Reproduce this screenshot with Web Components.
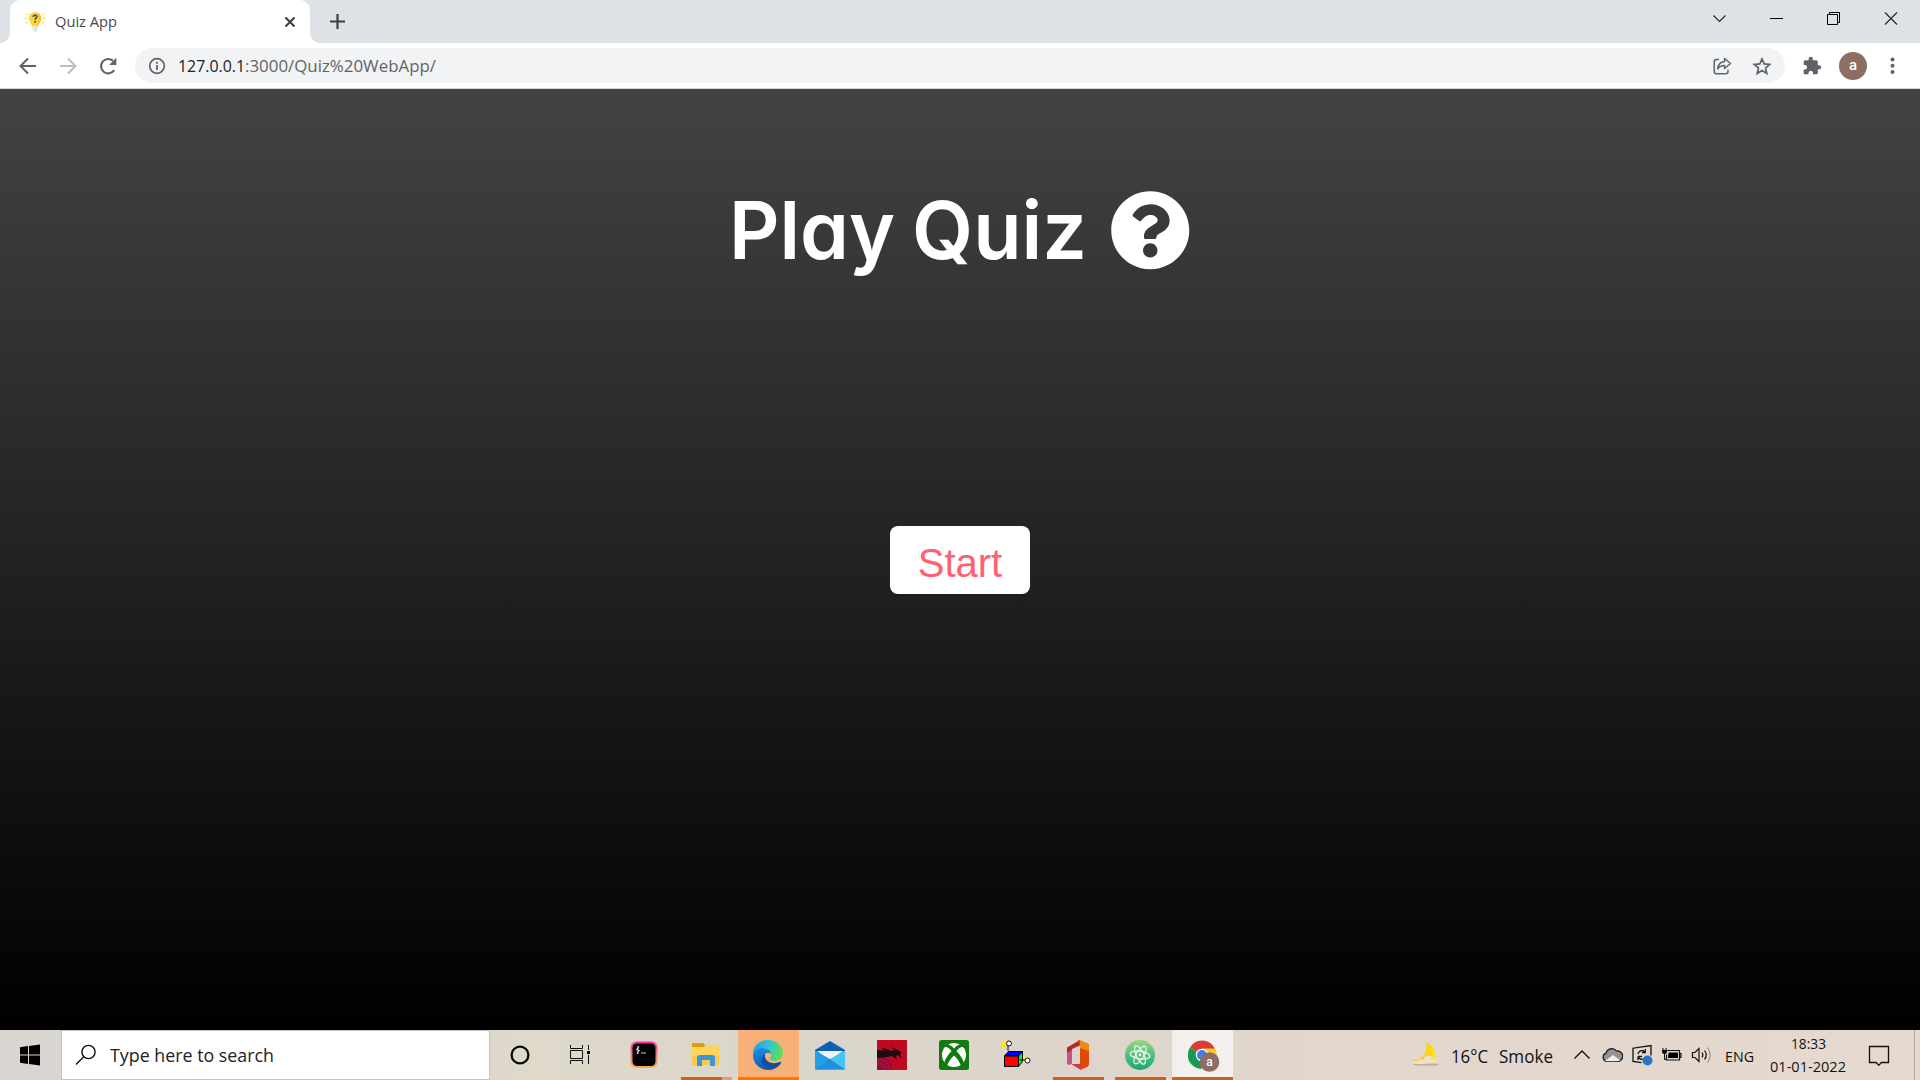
<!DOCTYPE html>
<html lang="en">
<head>
<meta charset="utf-8">
<title>Quiz App</title>
<style>
html,body{margin:0;height:100%;overflow:hidden;background:#000}
body{font-family:"Open Sans","Noto Sans",sans-serif}
</style>
</head>
<body>
<desktop-screen></desktop-screen>
<script>
function define(name, html, setup) {
  const tpl = document.createElement('template');
  tpl.innerHTML = html;
  customElements.define(name, class extends HTMLElement {
    constructor() {
      super();
      this.attachShadow({mode: 'open'}).appendChild(tpl.content.cloneNode(true));
    }
    connectedCallback() { if (setup) setup.call(this, this.shadowRoot); }
  });
}

/* Text condensed or widened to an exact advance width. */
define('fit-text', `
<style>
:host{display:block;flex:none;line-height:24px}
span{display:inline-block;white-space:pre;vertical-align:top;transform-origin:0 50%}
</style><span><slot></slot></span>`, function (root) {
  const span = root.querySelector('span'), w = +this.getAttribute('w');
  this.style.width = w + 'px';
  span.style.transform = 'scaleX(' + w / span.getBoundingClientRect().width + ')';
});

define('tab-strip', `
<style>
:host{display:flex;height:43px;background:#dee1e6;justify-content:space-between}
svg{display:block;flex:none}
.left,.right{display:flex}
.tab{display:flex;align-items:center;width:300px;margin-left:10px;height:43px;background:#fff;border-radius:10px 10px 0 0;position:relative;box-sizing:border-box;padding:0 13px 0 15px}
.tab::before,.tab::after{content:"";position:absolute;bottom:0;width:10px;height:10px}
.tab::before{left:-10px;background:radial-gradient(circle at 0 0,#dee1e6 9.6px,#fff 10.2px)}
.tab::after{right:-10px;background:radial-gradient(circle at 100% 0,#dee1e6 9.6px,#fff 10.2px)}
fit-text{margin:0 auto 2px 10px;font-size:14.6px;color:#45494d}
.plus{margin:13px 0 0 19px}
.right svg{margin-top:9px}
</style>
<div class="left">
 <div class="tab">
  <svg width="20" height="22" viewBox="0 0 20 22"><path d="M10 1.2c-3.8 0-6.3 2.7-6.3 6 0 3.6 2.9 4.6 3.3 8.3h6c.4-3.7 3.3-4.7 3.3-8.3 0-3.3-2.500-6-6.300-6z" fill="#fdd835"/><path d="M12.200 1.700c1.700 2.500 2 9-.7 13.800H13c.4-3.700 3.300-4.700 3.300-8.300 0-2.700-1.600-4.800-4.100-5.500z" fill="#fbc02d"/><path d="M7.200 16h5.600v2.400L11.300 21H8.700l-1.500-2.600z" fill="#d5ecf8"/><path d="M.8 3l1.900 1M0 7.500h2M.8 12l1.900-1M19.200 3l-1.900 1M20 7.500h-2M19.200 12l-1.900-1" stroke="#ffd54f" stroke-width="1.300"/><path d="M8.300 6c0-2.500 3.500-2.200 3.500-.2 0 1.500-1.700 1.400-1.700 3" fill="none" stroke="#455a64" stroke-width="1.700"/><circle cx="10.100" cy="10.700" r="1" fill="#455a64"/></svg>
  <fit-text w="62">Quiz App</fit-text>
  <svg width="14" height="14" viewBox="0 0 14 14"><path d="M2.500 2.500l9 9M11.500 2.500l-9 9" stroke="#3c4043" stroke-width="2.100"/></svg>
 </div>
 <svg class="plus" width="17" height="17" viewBox="0 0 17 17"><path d="M8.500 1v15M1 8.500h15" stroke="#3c4043" stroke-width="2.200"/></svg>
</div>
<div class="right">
 <svg width="57" height="20" viewBox="0 0 57 20" style="margin-right:0"><path d="M22.500 6.500l6 6 6-6" fill="none" stroke="#222" stroke-width="1.100"/></svg>
 <svg width="57" height="20" viewBox="0 0 57 20"><path d="M22 9.500h13" stroke="#000"/></svg>
 <svg width="57" height="20" viewBox="0 0 57 20"><path d="M22.500 5.500h10v10h-10zM24.500 5.500v-2h10v10h-2" fill="none" stroke="#000"/></svg>
 <svg width="58" height="20" viewBox="0 0 58 20"><path d="M23 3.500l12 12M35 3.500l-12 12" stroke="#222" stroke-width="1.100"/></svg>
</div>`);

define('tool-bar', `
<style>
:host{display:flex;align-items:center;height:45px;background:#fff;border-bottom:1px solid #d5d7da;box-sizing:content-box}
svg{display:block;flex:none}
.nav{display:flex;gap:20px;padding:0 17px 0 18px}
.box{display:flex;align-items:center;width:1650px;height:35px;border-radius:18px;background:#f1f3f4;box-sizing:border-box;padding:0 13px 0 12px}
fit-text{font-size:17px;color:#5f6368}
.host{color:#202124;margin-left:11px}
.path{margin-right:auto}
.avatar{width:28px;height:28px;border-radius:50%;background:#8d6e63;color:#fff;font:500 15px/26px Roboto,sans-serif;text-align:center;margin:0 24px 0 17px}
</style>
<div class="nav">
 <svg width="20" height="20" viewBox="0 0 20 20"><path d="M18 10H3M10 2.500L2.500 10l7.500 7.500" fill="none" stroke="#5f6368" stroke-width="2"/></svg>
 <svg width="20" height="20" viewBox="0 0 20 20"><path d="M2 10h15M10 2.500l7.500 7.500-7.500 7.500" fill="none" stroke="#bbbdc0" stroke-width="2"/></svg>
 <svg width="20" height="20" viewBox="0 0 20 20"><path d="M16.200 14.200A7.200 7.200 0 1 1 15 4.800" fill="none" stroke="#5f6368" stroke-width="2.100"/><path d="M18.300 1.800V9h-7.200z" fill="#5f6368"/></svg>
</div>
<div class="box">
 <svg width="20" height="20" viewBox="0 0 20 20"><circle cx="10" cy="10" r="7.300" fill="none" stroke="#5f6368" stroke-width="1.700"/><path d="M10 9v5M10 5.800v1.900" stroke="#5f6368" stroke-width="1.800"/></svg>
 <fit-text class="host" w="67">127.0.0.1</fit-text><fit-text class="path" w="191">:3000/Quiz%20WebApp/</fit-text>
 <svg width="20" height="20" viewBox="0 0 20 20" style="margin-right:20px"><path d="M7 3.500H4.500a2.300 2.300 0 0 0-2.300 2.300v9.700a2.300 2.300 0 0 0 2.300 2.300h9.200a2.300 2.300 0 0 0 2.300-2.300v-1.800" fill="none" stroke="#5f6368" stroke-width="1.500"/><path d="M12.500 2.500l6 5-6 5v-3c-3.300 0-5.300 1-6.800 3.300.3-3.900 2.600-6.800 6.800-7.300z" fill="none" stroke="#5f6368" stroke-width="1.500" stroke-linejoin="round"/></svg>
 <svg width="20" height="20" viewBox="0 0 20 20"><path d="M10 2.800l2.200 5.100 5.500.5-4.200 3.600 1.300 5.400L10 14.500l-4.800 2.900L6.500 12 2.300 8.400l5.500-.5z" fill="none" stroke="#5f6368" stroke-width="1.700"/></svg>
</div>
<svg width="20" height="20" viewBox="0 0 24 24" style="margin-left:17px"><path fill="#5f6368" d="M20.500 11H19V7c0-1.100-.9-2-2-2h-4V3.500C13 2.120 11.880 1 10.500 1S8 2.120 8 3.500V5H4c-1.100 0-1.990.9-1.990 2v3.800H3.500c1.490 0 2.700 1.210 2.700 2.700s-1.210 2.700-2.700 2.700H2V20c0 1.100.9 2 2 2h3.800v-1.500c0-1.490 1.210-2.700 2.700-2.700 1.490 0 2.700 1.210 2.700 2.700V22H17c1.100 0 2-.9 2-2v-4h1.500c1.380 0 2.500-1.120 2.500-2.500S21.880 11 20.500 11z"/></svg>
<div class="avatar">a</div>
<svg width="5" height="20" viewBox="0 0 5 20" style="margin-left:-1px"><g fill="#5f6368"><circle cx="2.500" cy="3.500" r="2"/><circle cx="2.500" cy="9.800" r="2"/><circle cx="2.500" cy="16.100" r="2"/></g></svg>`);

define('quiz-page', `
<style>
:host{display:flex;flex-direction:column;align-items:center;flex:1;background:linear-gradient(to top,#000,#434343)}
h1{display:flex;margin:80px 0 0;height:120px;font:600 80px/120px Inter,sans-serif;font-feature-settings:"cv11","ss03";color:#fff}
h1 fit-text{line-height:122px}
svg{display:block;margin:21px 0 0 23px}
button{margin-top:237px;width:140px;height:68px;border:0;border-radius:8px;background:#fff;color:#ff6070;font:40px/44px "Liberation Sans",Arial,sans-serif;padding:6px 0 0}
</style>
<h1><fit-text w="166">Play</fit-text><fit-text w="175" style="margin-left:17px">Quiz</fit-text>
<svg width="80.500" height="80.500" viewBox="0 0 512 512"><path fill="#fff" d="M504 256c0 136.997-111.043 248-248 248S8 392.997 8 256C8 119.083 119.043 8 256 8s248 111.083 248 248zM262.655 90c-54.497 0-89.255 22.957-116.549 63.758-3.536 5.286-2.353 12.415 2.715 16.258l34.699 26.310c5.205 3.947 12.621 3.008 16.665-2.122 17.864-22.658 30.113-35.797 57.303-35.797 20.429 0 45.698 13.148 45.698 32.958 0 14.976-12.363 22.667-32.534 33.976C247.128 238.528 216 254.941 216 296v4c0 6.627 5.373 12 12 12h56c6.627 0 12-5.373 12-12v-1.333c0-28.462 83.186-29.647 83.186-106.667 0-58.002-60.165-102-116.531-102zM256 338c-25.365 0-46 20.635-46 46 0 25.364 20.635 46 46 46s46-20.636 46-46c0-25.364-20.635-46-46-46z"/></svg></h1>
<button>Start</button>`);

define('task-button', `
<style>
:host{display:flex;flex-direction:column;align-items:center;width:61px;height:50px;flex:none;margin-right:1px;box-sizing:border-box;padding-top:10px}
:host([active]){background:#f3efec}
:host([alert]){background:#f9b078}
.icon{height:30px;width:30px;margin-right:1px}
.line{height:3px;width:51px;margin-top:7px}
:host([open]) .line{background:#c8602a}
:host([multi]) .line{background:linear-gradient(90deg,#c8602a 41px,#df9e80 41px)}
:host([active]) .line{width:61px;background:#c8602a}
:host([alert]) .line{width:61px;background:#ff7700}
</style><div class="icon"><slot></slot></div><div class="line"></div>`);

define('task-bar', `
<style>
:host{display:flex;height:50px;flex:none;background:linear-gradient(90deg,#d9d6d2 0,#dcd7cc 20%,#dfd9ca 28%,#dad5cb 42%,#ddd5cb 55%,#e2d7cd 70%,#e6d9cf 100%)}
svg{display:block;flex:none}
.search{display:flex;align-items:center;width:429px;height:50px;box-sizing:border-box;background:#fff;border:1px solid #c4c4c8;margin-right:0}
.search svg{margin-left:13px}
.search fit-text{font-size:18.200px;color:#222;margin:0 0 0 13px}
.tray{display:flex;align-items:center;margin-left:auto;color:#111}
.clock{display:flex;flex-direction:column;align-items:center;width:76px;margin-left:16px;font-size:14.800px}
.clock fit-text{line-height:23px}
</style>
<svg width="61" height="50" viewBox="0 0 61 50"><path d="M20 17.200l8-1.100v8.400h-8zM29 16l11-1.500v10H29zM20 25.500h8v8.400l-8-1.100zM29 25.500h11v10L29 34z" fill="#000"/></svg>
<div class="search">
 <svg width="22" height="22" viewBox="0 0 22 22"><circle cx="13.500" cy="8" r="6.600" fill="none" stroke="#111" stroke-width="1.400"/><path d="M8.800 12.700L1 20.500" stroke="#111" stroke-width="1.400"/></svg>
 <fit-text w="164">Type here to search</fit-text>
</div>
<svg width="60" height="50" viewBox="0 0 60 50"><circle cx="30" cy="25" r="8.400" fill="none" stroke="#0a0a0a" stroke-width="2.300"/></svg>
<svg width="64" height="50" viewBox="0 0 64 50"><path d="M20.500 15v3.500h12V15M20.500 34v-3.500h12V34M20.500 20.500h12v8h-12zM38.500 15v5M38.500 25v9" fill="none" stroke="#111"/><path d="M37 21h3v3h-3z"/></svg>
<task-button><svg width="30" height="30" viewBox="0 0 30 30"><defs><linearGradient id="h" x2="0" y2="1"><stop stop-color="#ff2fa8"/><stop offset=".55" stop-color="#f67d80"/><stop offset="1" stop-color="#f9ac45"/></linearGradient></defs><rect x="1.500" y="1.500" width="27" height="26.500" rx="6" fill="url(#h)"/><rect x="3.500" y="3.500" width="23" height="22.500" rx="4.500"/><path d="M10 6.500l-2.300 3.200 2.500.8-2.300 3M9 6v8" fill="none" stroke="#ddd" stroke-width="1.200"/><path d="M12 13h5" stroke="#aaa" stroke-width="1.200"/></svg></task-button>
<task-button open multi><svg width="30" height="30" viewBox="0 0 30 30"><path d="M1 3h11l2 2-1 3H1z" fill="#e29c08"/><path d="M1 7h13l1-2h13v20H1z" fill="#ffd45e"/><path d="M1 16h27v9H1z" fill="#fac94b"/><path d="M6 26V17.500q0-2.500 2.500-2.500h13q2.500 0 2.500 2.500V26h-5v-6h-8v6z" fill="#3c94d9"/></svg></task-button>
<task-button alert><svg width="30" height="30" viewBox="0 0 30 30"><defs><linearGradient id="e1" x1="0" y1=".3" x2="1" y2=".5"><stop stop-color="#209fe5"/><stop offset=".5" stop-color="#2fc5d0"/><stop offset="1" stop-color="#65dd50"/></linearGradient><linearGradient id="e2" x2=".3" y2="1"><stop stop-color="#1795e8"/><stop offset="1" stop-color="#0c5bb5"/></linearGradient></defs><path d="M0 14C0 5 7 0 15 0c9 0 15 6 15 13 0 5-4 8-8 8-3 0-5-1-5-2.500 0-1 1.300-1.500 1.300-4C18.300 11 14 8 9 8 5 8 2 10 0 14z" fill="url(#e1)"/><path d="M0 15C1 10 5 8 9 8c5 0 9.300 3 9.300 6.500 0-2-6-3.500-7 1.500-1 7 4 13 9 13.300C9 32 0 25 0 15z" fill="url(#e2)"/><path d="M12 14c-5 3-5 11 3 14.500C20 31 26 27 28 23c.5-1-.5-1.500-1.300-1C20 25 11 22 12 14z" fill="#104fa0"/></svg></task-button>
<task-button><svg width="30" height="30" viewBox="0 0 30 30"><path d="M0 10L15 1l15 9v8H0z" fill="#0b62b3"/><path d="M2 11h26L15 21z" fill="#f3f3f5"/><path d="M0 10.500L15 19l15 10.500H0z" fill="#259fe3"/><path d="M15 19l15-8.500V29.500z" fill="#43c6f4"/><path d="M0 29.500L15 19l15 10.500z" fill="#1f8fdc"/></svg></task-button>
<task-button><svg width="30" height="30" viewBox="0 0 30 30"><path d="M0 0h30v30H0z" fill="#bd0a1e"/><path d="M0 17c9-2 14 3 16 13H0z" fill="#950c33"/><path d="M0 20c7-2 11 2 13 10M0 24c5-1 7 1 9 6" fill="none" stroke="#be1447"/><path d="M0 10c4 0 6 1 8 1l-4-3c5 0 8 2 10 3l4-1-5-3c4 1 9 3 12 6l-2 1 2 5-4-4-2 1 1 4-5-4-5 1-10 1z" fill="#1d0b12"/></svg></task-button>
<task-button><svg width="30" height="30" viewBox="0 0 30 30"><rect width="30" height="30" rx="2.500" fill="#107c10"/><circle cx="15" cy="15" r="12" fill="#fff"/><path d="M4 4q6-1 11 4.500Q20 3 26 4l-2 3q-3-.5-6.500 4Q25 19 25.500 26l-3 1Q20 20 15 15.500 10 20 7.500 27l-3-1Q5 19 12.500 11 9 6.500 6 7z" fill="#107c10"/></svg></task-button>
<task-button><svg width="30" height="30" viewBox="0 0 30 30"><path d="M7 11V4" stroke="#111" fill="none"/><path d="M0 1h7v3H4v3H1z" fill="#ffee00"/><circle cx="8" cy="3.500" r="2.500" fill="#fff" stroke="#111"/><path d="M3.500 16l4-4.500h14l-4 4.500z" fill="#00f" stroke="#000"/><path d="M17.500 16l4-4.500v10l-4 5z" fill="#1ee01e" stroke="#000"/><path d="M3.500 16h14v10.500h-14z" fill="#f00" stroke="#000"/><path d="M19 20h5" stroke="#000"/><path d="M23 18l4-2 2 4-4 2z" fill="#ffee00"/><circle cx="26.500" cy="20.500" r="2.500" fill="#fff" stroke="#111"/></svg></task-button>
<task-button open><svg width="30" height="30" viewBox="0 0 30 30"><path d="M4 7.500L17 0v5.500L9 9v14l-3 2-2-2z" fill="#b7272e"/><path d="M4 13l5-3v13l-4 2-1-2z" fill="#ca5383"/><path d="M15 0l7 2.500q4 1 4 3v19q0 2-3 3l-6 2.500V6z" fill="#e04a05"/><path d="M17 0l5 2.500q4 1 4 3V11l-9-3z" fill="#ee8b12"/><path d="M8 24h10v6z" fill="#d8344a"/></svg></task-button>
<task-button open><svg width="30" height="30" viewBox="0 0 30 30"><defs><linearGradient id="a" x2="0" y2="1"><stop stop-color="#96d783"/><stop offset="1" stop-color="#17a576"/></linearGradient></defs><circle cx="15" cy="15" r="15" fill="url(#a)"/><g fill="none" stroke="#e0f7e5" stroke-width="1.300"><ellipse cx="15" cy="15" rx="10" ry="3.800" transform="rotate(8 15 15)"/><ellipse cx="15" cy="15" rx="10" ry="3.800" transform="rotate(65 15 15)"/><ellipse cx="15" cy="15" rx="10" ry="3.800" transform="rotate(122 15 15)"/></g><circle cx="15" cy="15" r="1.400" fill="#fff"/></svg></task-button>
<task-button active><svg width="32" height="32" viewBox="0 0 32 32" style="margin-left:1px"><path d="M14 15L2 7.500A14 14 0 0 1 27 9z" fill="#d93c34"/><path d="M14 15L2 7.500A14 14 0 0 0 13 29l5-9z" fill="#1b9953"/><path d="M14 8.500h13a14 14 0 0 1-13 20.500l6-13z" fill="#fbc52c"/><circle cx="14" cy="15" r="6.300" fill="#fff"/><circle cx="14" cy="15" r="5" fill="#3c7ff0"/><circle cx="21.500" cy="22" r="9.800" fill="#8d6e63"/><text x="21.500" y="26" font-family="Roboto,sans-serif" font-weight="500" font-size="12" fill="#fff" text-anchor="middle">a</text></svg></task-button>
<div class="tray">
 <svg width="28" height="28" viewBox="0 0 28 28"><defs><linearGradient id="m"><stop stop-color="#ffb612"/><stop offset="1" stop-color="#ffe11b"/></linearGradient></defs><path d="M14 1c7 3 11 10 9 17-3 7-16 7-22 1 9 1 15-7 13-18z" fill="url(#m)"/><ellipse cx="14" cy="23.500" rx="13" ry="1.300" fill="#c4aea0"/><path d="M1 22q1-3 4-2 2-3 6-1 2-5 7-4 4 0 3 3 6 1 4 3-6 2-11 1.500-7 1.500-13-.5z" fill="#f0e0c2"/></svg>
 <fit-text w="37" style="font-size:17.500px;margin:2px 0 0 11px">16°C</fit-text>
 <fit-text w="54" style="font-size:17.500px;margin:2px 0 0 11px">Smoke</fit-text>
 <svg width="18" height="20" viewBox="0 0 18 20" style="margin-left:20px"><path d="M1.500 13.500L9 6l7.500 7.500" fill="none" stroke="#111" stroke-width="1.300"/></svg>
 <svg width="22" height="20" viewBox="0 0 22 20" style="margin-left:10px"><path d="M5.500 16.500a4.400 4.400 0 0 1-.5-8.400A6 6 0 0 1 15.500 6a5.300 5.300 0 0 1 1.800 10.500z" fill="#939393" stroke="#111" stroke-width="1.200"/><path d="M4 16l8-6 7 5q-1 1.200-3 1.200H5.500z" fill="#eee"/></svg>
 <svg width="22" height="24" viewBox="0 0 22 24" style="margin-left:8px"><path d="M10.500 19.700L2 18.500V5.200L20 2.500v10" fill="none" stroke="#111" stroke-width="1.300"/><path d="M7 11q1-4 5-3.300l2 1.500M14.300 6v3.500H11M7 13.500v3.500M7 13.500h4M7.500 14.500q2 2.500 5 1.500" fill="none" stroke="#111" stroke-width="1.300"/><circle cx="16.500" cy="17.500" r="5" fill="#2874c6"/></svg>
 <svg width="21" height="20" viewBox="0 0 21 20" style="margin-left:8px"><path d="M5 5.500h13.500v9.500H5.500V9.500M18.500 8.500h1.500v4h-1.500" fill="none" stroke="#111" stroke-width="1.200"/><path d="M7.500 7.500h9.500V13H7zM1 5h5v2q0 2-2.500 2T1 7z"/><path d="M2 3v2.500M5 3v2.500M3.500 8v6.500H5" stroke="#111" fill="none"/></svg>
 <svg width="21" height="20" viewBox="0 0 21 20" style="margin-left:9px"><path d="M1.500 7.500H4l4-4v13l-4-4H1.500z" fill="none" stroke="#111" stroke-width="1.200"/><path d="M11 7.500q1.800 2.500 0 5M13.500 5.500q3.500 4.500 0 9" fill="none" stroke="#111" stroke-width="1.200"/><path d="M16.500 2.500q5.500 7.500 0 15" fill="none" stroke="#9b928c" stroke-width="1.200"/></svg>
 <fit-text w="29" style="font-size:15px;margin:2px 0 0 13px">ENG</fit-text>
 <div class="clock"><fit-text w="35">18:33</fit-text><fit-text w="76">01-01-2022</fit-text></div>
 <svg width="22" height="22" viewBox="0 0 22 22" style="margin-left:22px"><path d="M1.500 2.500h19v16h-7l-2.700 2.700-2.700-2.700H1.500z" fill="none" stroke="#111" stroke-width="1.300"/></svg>
 <svg width="6" height="50" viewBox="0 0 6 50" style="margin-left:24px"><path d="M.5 0v50" stroke="#b5aaa3"/></svg>
</div>`);

define('desktop-screen', `
<style>:host{display:flex;flex-direction:column;width:1920px;height:1080px;overflow:hidden}</style>
<tab-strip></tab-strip><tool-bar></tool-bar><quiz-page></quiz-page><task-bar></task-bar>`);
</script>
</body>
</html>
